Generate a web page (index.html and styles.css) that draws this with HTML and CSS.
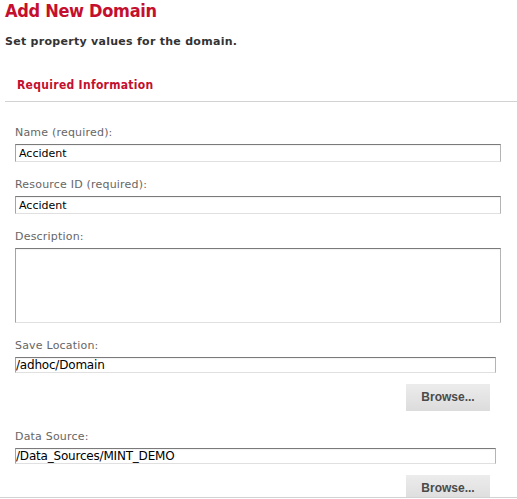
FILE: index.html
```html
<!DOCTYPE html>
<html>
<head>
<meta charset="utf-8">
<link rel="stylesheet" href="styles.css">
</head>
<body>
<div class="page">
  <h1 class="title">Add New Domain</h1>
  <p class="intro">Set property values for the domain.</p>
  <div class="section-head">Required Information</div>
  <div class="form">
    <div class="field">
      <label class="label">Name (required):</label>
      <div class="input">Accident</div>
    </div>
    <div class="field">
      <label class="label">Resource ID (required):</label>
      <div class="input">Accident</div>
    </div>
    <div class="field">
      <label class="label">Description:</label>
      <div class="textarea"></div>
    </div>
    <div class="field">
      <label class="label">Save Location:</label>
      <div class="input path">/adhoc/Domain</div>
      <div class="actions"><button class="btn">Browse...</button></div>
    </div>
    <div class="field">
      <label class="label">Data Source:</label>
      <div class="input path">/Data_Sources/MINT_DEMO</div>
      <div class="actions"><button class="btn">Browse...</button></div>
    </div>
  </div>
</div>
</body>
</html>
```
FILE: styles.css
```css
html, body { margin: 0; padding: 0; background: #fff; }
body { font-family: "DejaVu Sans", Verdana, sans-serif; overflow: hidden; height: 499px; }
.title {
  margin: 0 0 0 5px;
  font-size: 18px; line-height: 22px; font-weight: bold;
  color: #c4102e; font-stretch: condensed; letter-spacing: -0.3px;
}
.intro {
  margin: 13px 0 0 5px; font-size: 11px; line-height: 14px; font-weight: bold; color: #333;
  letter-spacing: 0.28px;
}
.section-head {
  margin: 28px 0 0 5px; padding: 0 0 8px 12px;
  font-size: 12px; line-height: 16px; font-weight: bold; color: #c4102e;
  font-stretch: condensed; letter-spacing: 0.3px;
  border-bottom: 1px solid #d2d2d2;
}
.form {
  box-sizing: border-box; height: 396px; overflow: hidden;
  padding: 24px 0 0 15px;
  border-bottom: 1px solid #d2d2d2;
}
.field { margin-bottom: 16px; }
.label {
  display: block; font-size: 11px; line-height: 14px; color: #666;
  letter-spacing: 0.2px; margin-bottom: 4px;
}
.input {
  box-sizing: border-box; width: 486px; height: 18px;
  border: 1px solid #e0e0e0; border-top-color: #7a7a7a; border-left-color: #a4a4a4; border-right-color: #b4b4b4;
  box-shadow: inset 0 1px 1px rgba(0,0,0,0.05);
  font-size: 11px; line-height: 16px; color: #000; padding: 1px 0 0 3px;
  white-space: nowrap; overflow: hidden;
}
.input.path {
  width: 481px; height: 16px; padding: 0;
  font-size: 12px; line-height: 14px; letter-spacing: -0.2px;
}
.textarea {
  box-sizing: border-box; width: 486px; height: 75px;
  border: 1px solid #e0e0e0; border-top-color: #7a7a7a; border-left-color: #a4a4a4; border-right-color: #b4b4b4;
  box-shadow: inset 0 1px 1px rgba(0,0,0,0.05);
}
.actions { display: flex; justify-content: flex-end; width: 475px; margin-top: 11px; padding-bottom: 3px; }
.btn {
  display: block; width: 84px; height: 27px; border: none; border-radius: 0;
  background: linear-gradient(#ececec, #dcdcdc);
  font-family: "Liberation Sans", Arial, sans-serif; font-size: 12px; font-weight: bold; color: #4a4a4a;
  padding: 0; line-height: 27px;
}
```
